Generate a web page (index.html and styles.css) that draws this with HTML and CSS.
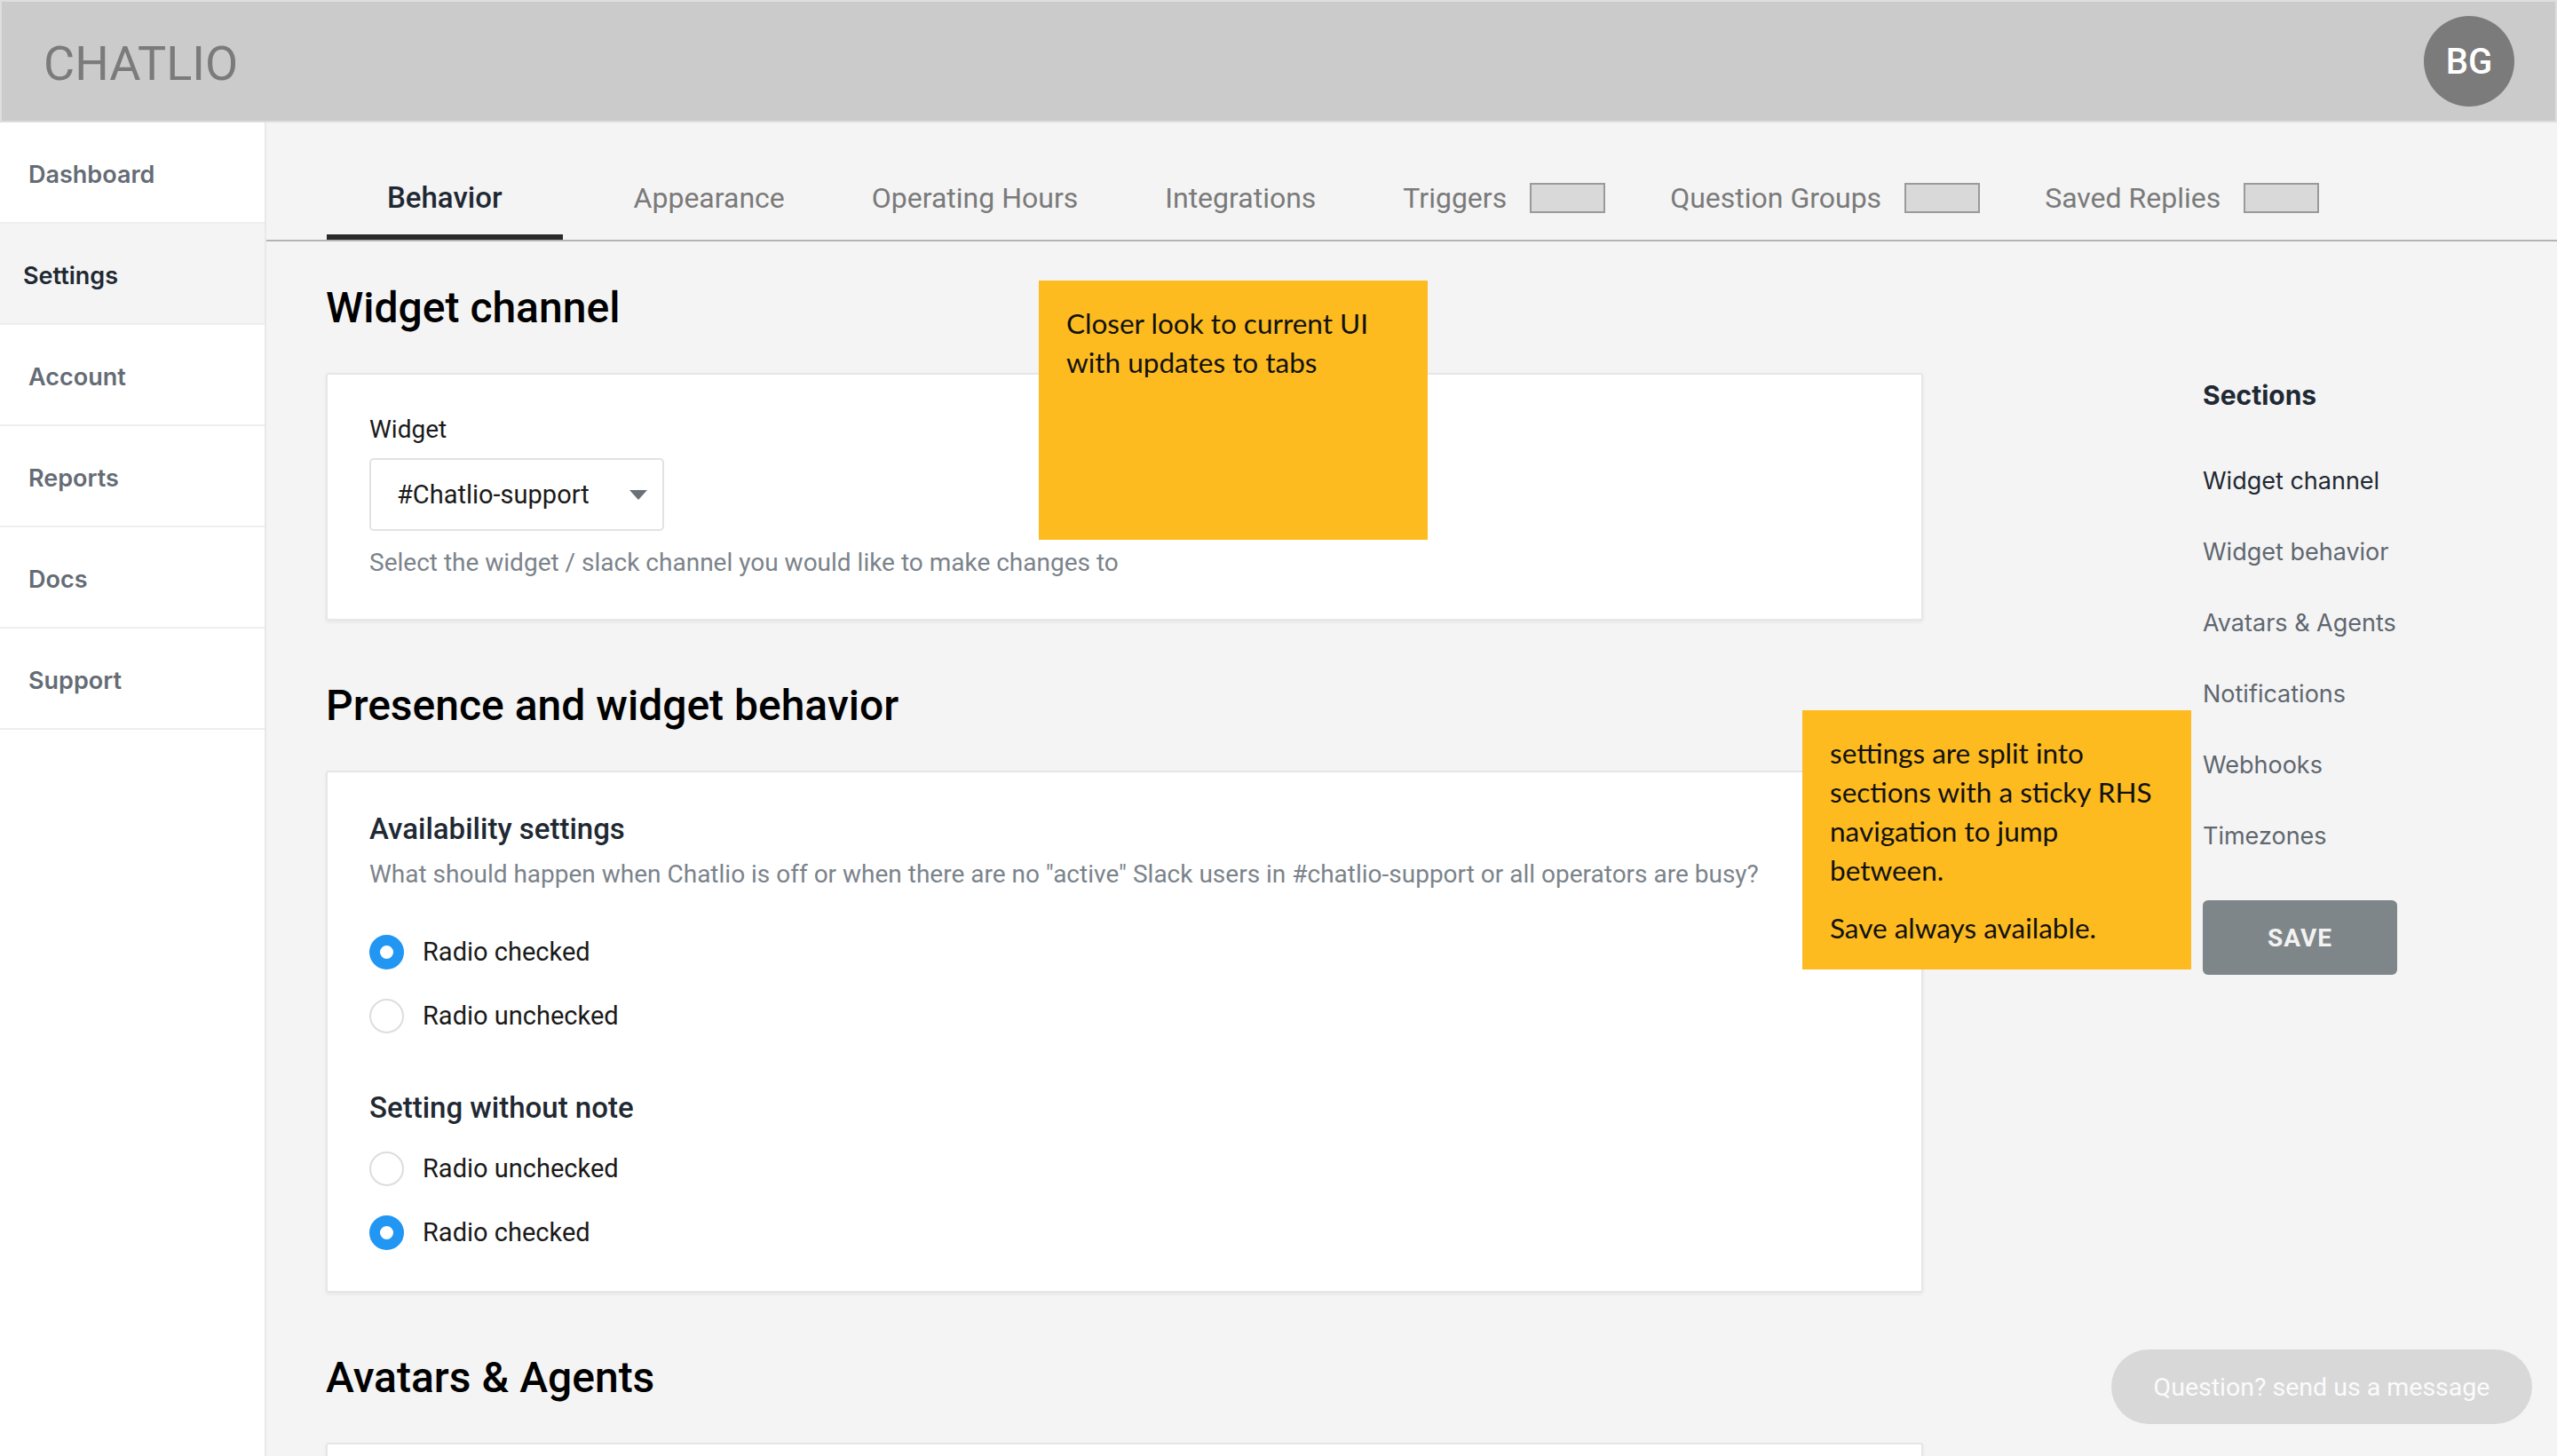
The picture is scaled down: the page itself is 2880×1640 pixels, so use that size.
FILE: index.html
```html
<!DOCTYPE html>
<html lang="en">
<head>
    <meta charset="UTF-8">
    <title>Chatlio - Settings</title>
    <link rel="stylesheet" href="styles.css">
</head>
<body>
    <header class="topbar">
        <div class="logo">CHATLIO</div>
        <div class="avatar">BG</div>
    </header>

    <div class="layout">
        <nav class="sidebar">
            <a class="nav-item">Dashboard</a>
            <a class="nav-item active">Settings</a>
            <a class="nav-item">Account</a>
            <a class="nav-item">Reports</a>
            <a class="nav-item">Docs</a>
            <a class="nav-item">Support</a>
        </nav>

        <main class="main">
            <div class="tabs">
                <div class="tab active">Behavior</div>
                <div class="tab">Appearance</div>
                <div class="tab">Operating Hours</div>
                <div class="tab">Integrations</div>
                <div class="tab has-badge">Triggers <span class="tab-badge"></span></div>
                <div class="tab has-badge">Question Groups <span class="tab-badge"></span></div>
                <div class="tab has-badge">Saved Replies <span class="tab-badge"></span></div>
            </div>

            <div class="content">
                <div class="sections-col">
                    <section class="section">
                        <h2>Widget channel</h2>
                        <div class="card">
                            <label class="field-label">Widget</label>
                            <div class="select">
                                <span>#Chatlio-support</span>
                                <span class="caret"></span>
                            </div>
                            <p class="help">Select the widget / slack channel you would like to make changes to</p>
                        </div>
                    </section>

                    <section class="section">
                        <h2>Presence and widget behavior</h2>
                        <div class="card card-behavior">
                            <h3>Availability settings</h3>
                            <p class="help">What should happen when Chatlio is off or when there are no "active" Slack users in #chatlio-support or all operators are busy?</p>
                            <div class="radio-group first">
                                <div class="radio-row"><span class="radio checked"></span>Radio checked</div>
                                <div class="radio-row"><span class="radio"></span>Radio unchecked</div>
                            </div>
                            <h3 class="setting-title">Setting without note</h3>
                            <div class="radio-group">
                                <div class="radio-row"><span class="radio"></span>Radio unchecked</div>
                                <div class="radio-row"><span class="radio checked"></span>Radio checked</div>
                            </div>
                        </div>
                    </section>

                    <section class="section">
                        <h2>Avatars &amp; Agents</h2>
                        <div class="card card-empty"></div>
                    </section>
                </div>

                <aside class="rhs">
                    <h4>Sections</h4>
                    <ul class="rhs-nav">
                        <li class="current">Widget channel</li>
                        <li>Widget behavior</li>
                        <li>Avatars &amp; Agents</li>
                        <li>Notifications</li>
                        <li>Webhooks</li>
                        <li>Timezones</li>
                    </ul>
                    <button class="save-btn">SAVE</button>
                </aside>
            </div>
        </main>
    </div>

    <div class="note note-tabs">
        <p>Closer look to current UI<br>with updates to tabs</p>
    </div>
    <div class="note note-rhs">
        <p>settings are split into<br>sections with a sticky RHS<br>navigation to jump<br>between.</p>
        <p>Save always available.</p>
    </div>

    <div class="chat-pill">Question? send us a message</div>
</body>
</html>
```

FILE: styles.css
```css
html, body {
    margin: 0;
    padding: 0;
    background-color: #f4f4f4;
    font-family: Roboto, "Liberation Sans", Arial, sans-serif;
    color: #1a1a1a;
}

* {
    box-sizing: border-box;
}

.topbar {
    height: 138px;
    background-color: #cbcbcb;
    border: 2px solid #dedede;
    display: flex;
    align-items: center;
    justify-content: space-between;
    padding: 0 46px 0 47px;
}

.logo {
    font-size: 54px;
    color: #7b7b7b;
    margin-top: 4px;
}

.avatar {
    width: 102px;
    height: 102px;
    border-radius: 50%;
    background-color: #7b7b7b;
    color: #fff;
    font-size: 40px;
    font-weight: 500;
    display: flex;
    align-items: center;
    justify-content: center;
}

.layout {
    display: flex;
    height: calc(100vh - 138px);
    overflow: hidden;
}

/* left nav */
.sidebar {
    width: 300px;
    flex: none;
    background-color: #fff;
    border-right: 2px solid #e8e8e8;
}

.nav-item {
    display: flex;
    align-items: center;
    height: 114px;
    padding: 5px 0 0 32px;
    border-bottom: 2px solid #eeeeee;
    font-family: Inter, "Noto Sans", sans-serif;
    font-size: 27px;
    font-weight: 600;
    color: #646c75;
}

.nav-item.active {
    background-color: #f4f4f4;
    color: #1f2933;
    padding-left: 26px;
}

.main {
    flex: 1;
    min-width: 0;
}

/* tabs */
.tabs {
    display: flex;
    align-items: flex-end;
    padding: 65px 0 0 68px;
    border-bottom: 2px solid #b4b4b4;
}

.tab {
    position: relative;
    display: flex;
    align-items: center;
    padding: 0 49px 27px;
    font-size: 32px;
    line-height: 40px;
    color: #7a7a7a;
    white-space: nowrap;
}

.tab.has-badge {
    padding-right: 24px;
}

.tab.active {
    padding: 0 68px 27px;
    margin-right: 31px;
    color: #1f2933;
    font-weight: 500;
    font-size: 33px;
}

.tab.active::after {
    content: "";
    position: absolute;
    left: 0;
    right: 0;
    bottom: 0;
    height: 6px;
    background-color: #2a2a2a;
}

.tab-badge {
    display: inline-block;
    width: 85px;
    height: 34px;
    margin-left: 26px;
    background-color: #d9d9d9;
    border: 2px solid #9a9a9a;
}

/* content */
.content {
    display: flex;
    padding-left: 67px;
}

.sections-col {
    width: 1799px;
    flex: none;
    padding-top: 47px;
}

.section {
    margin-bottom: 68px;
}

.section h2 {
    margin: 0 0 45px;
    font-size: 48px;
    line-height: 56px;
    font-weight: 500;
    color: #000;
}

.card {
    background-color: #fff;
    border: 2px solid #e6e6e6;
    border-radius: 3px;
    box-shadow: 0 2px 4px rgba(0, 0, 0, 0.06);
    padding: 45px 47px 46px;
}

.field-label {
    display: block;
    font-size: 28px;
    line-height: 34px;
    color: #1a1a1a;
}

.select {
    display: flex;
    align-items: center;
    justify-content: space-between;
    width: 332px;
    height: 82px;
    margin-top: 15px;
    padding: 0 17px 0 29px;
    border: 2px solid #e2e2e2;
    border-radius: 5px;
    font-size: 29px;
    color: #1a1a1a;
}

.caret {
    width: 0;
    height: 0;
    border-left: 10px solid transparent;
    border-right: 10px solid transparent;
    border-top: 11px solid #6b7177;
}

.help {
    margin: 19px 0 0;
    font-size: 28px;
    line-height: 34px;
    color: #7b838b;
}

.card-behavior {
    padding: 46px 47px 30px;
}

.card-behavior h3 {
    margin: 0;
    font-size: 33px;
    line-height: 36px;
    font-weight: 500;
    color: #1f2933;
}

.card-behavior .help {
    margin-top: 16px;
}

.radio-group.first {
    margin-top: 34px;
}

.card-behavior .setting-title {
    margin-top: 50px;
    margin-bottom: 14px;
}

.radio-row {
    display: flex;
    align-items: center;
    height: 72px;
    font-size: 29px;
    color: #1a1a1a;
}

.radio {
    width: 39px;
    height: 39px;
    border-radius: 50%;
    border: 2px solid #dddddd;
    background-color: #fff;
    margin-right: 21px;
    flex: none;
}

.radio.checked {
    border: 12px solid #2196f3;
}

.card-empty {
    height: 320px;
}

/* right hand nav */
.rhs {
    width: 219px;
    flex: none;
    margin-left: 315px;
    padding-top: 155px;
    font-family: Inter, "Noto Sans", sans-serif;
}

.rhs h4 {
    margin: 0;
    font-size: 30px;
    line-height: 36px;
    font-weight: 700;
    color: #1f2933;
}

.rhs-nav {
    list-style: none;
    margin: 61px 0 0;
    padding: 0;
}

.rhs-nav li {
    font-size: 27px;
    line-height: 36px;
    color: #5f6770;
    white-space: nowrap;
    margin-bottom: 44px;
}

.rhs-nav li:last-child {
    margin-bottom: 0;
}

.rhs-nav li.current {
    color: #1f2933;
}

.save-btn {
    display: block;
    width: 219px;
    height: 84px;
    margin-top: 54px;
    border: none;
    border-radius: 6px;
    background-color: #7f8689;
    color: #f2f2f2;
    font-family: Roboto, sans-serif;
    font-size: 28px;
    font-weight: 700;
    letter-spacing: 1px;
}

/* sticky notes on top of the mock */
.note {
    position: absolute;
    width: 438px;
    height: 292px;
    padding: 26px 31px;
    background-color: #fdbb1f;
    font-family: Lato, "Open Sans", sans-serif;
    font-size: 31.5px;
    line-height: 44px;
    color: #111;
    z-index: 5;
}

.note p {
    margin: 0;
}

.note p + p {
    margin-top: 21px;
}

.note-tabs {
    left: 1170px;
    top: 316px;
}

.note-rhs {
    left: 2030px;
    top: 800px;
}

.chat-pill {
    position: fixed;
    right: 28px;
    bottom: 36px;
    width: 474px;
    height: 84px;
    border-radius: 42px;
    background-color: #d8d8d8;
    color: #fbfbfb;
    font-size: 28.5px;
    display: flex;
    align-items: center;
    justify-content: center;
}
```
